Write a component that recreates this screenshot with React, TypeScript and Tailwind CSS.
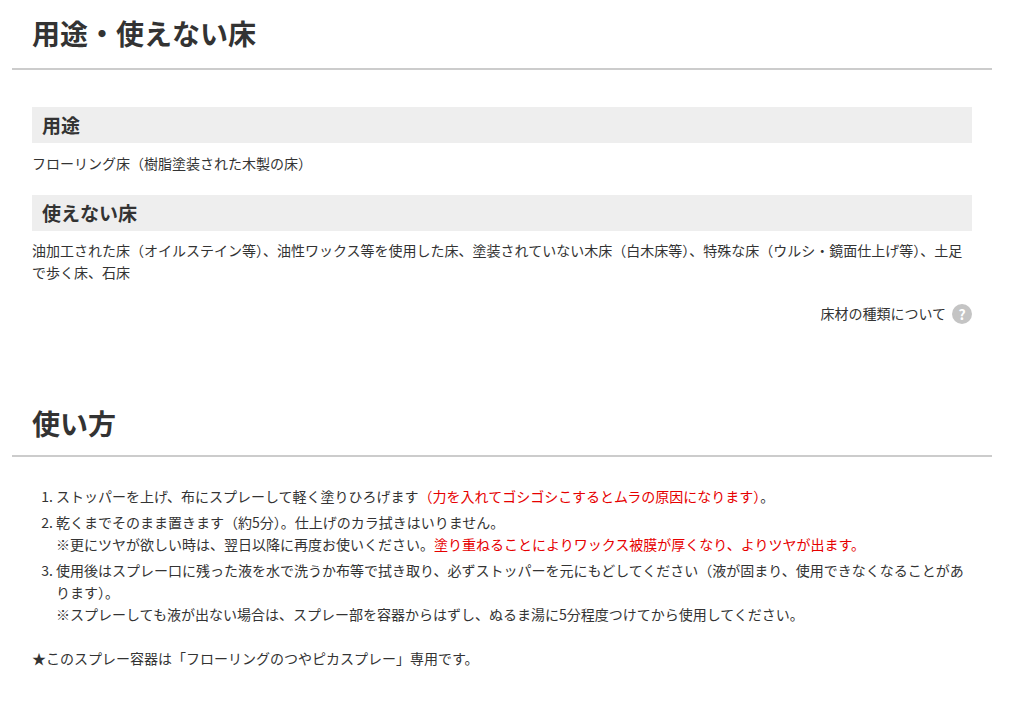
const font = { fontFamily: '"Noto Sans CJK JP", "Liberation Sans", sans-serif' };

function SubTitle({ children }: { children: React.ReactNode }) {
  return (
    <h3 className="bg-[#eeeeee] h-[36px] flex items-center px-[10px] text-[19px] font-bold text-[#333]">{children}</h3>
  );
}

export default function App() {
  return (
    <div className="w-[1036px] bg-white text-[#333] text-[14px]" style={font}>
      <div className="ml-[12px] mr-[44px] border-b-2 border-[#cccccc] h-[70px] flex items-center pl-[20px] pb-[2px]">
        <h2 className="text-[28px] font-bold leading-none">用途・使えない床</h2>
      </div>
      <div className="px-[32px] pr-[64px]">
        <div className="mt-[37px]">
          <SubTitle>用途</SubTitle>
          <p className="mt-[9px] leading-[22px]">フローリング床（樹脂塗装された木製の床）</p>
        </div>
        <div className="mt-[21px]">
          <SubTitle>使えない床</SubTitle>
          <p className="mt-[8px] leading-[22px]">
            油加工された床（オイルステイン等）、油性ワックス等を使用した床、塗装されていない木床（白木床等）、特殊な床（ウルシ・鏡面仕上げ等）、土足で歩く床、石床
          </p>
        </div>
        <div className="flex justify-end items-center gap-[6px] mt-[20px]">
          <span>床材の種類について</span>
          <span className="w-[20px] h-[20px] rounded-full bg-[#c4c4c4] text-white text-[14px] font-bold flex items-center justify-center leading-none">?</span>
        </div>
      </div>
      <div className="ml-[12px] mr-[44px] border-b-2 border-[#cccccc] h-[70px] flex items-center pl-[20px] mt-[63px] pt-[4px]">
        <h2 className="text-[28px] font-bold leading-none">使い方</h2>
      </div>
      <div className="px-[32px] pr-[64px]">
        <ol className="list-decimal pl-[24px] mt-[28px] leading-[22px] flex flex-col gap-[4px]">
          <li>
            ストッパーを上げ、布にスプレーして軽く塗りひろげます<span className="text-[#e60000]">（力を入れてゴシゴシこするとムラの原因になります）</span>。
          </li>
          <li>
            乾くまでそのまま置きます（約5分）。仕上げのカラ拭きはいりません。
            <br />
            ※更にツヤが欲しい時は、翌日以降に再度お使いください。<span className="text-[#e60000]">塗り重ねることによりワックス被膜が厚くなり、よりツヤが出ます。</span>
          </li>
          <li>
            使用後はスプレー口に残った液を水で洗うか布等で拭き取り、必ずストッパーを元にもどしてください（液が固まり、使用できなくなることがあります）。
            <br />
            ※スプレーしても液が出ない場合は、スプレー部を容器からはずし、ぬるま湯に5分程度つけてから使用してください。
          </li>
        </ol>
        <p className="mt-[22px] leading-[22px]">★このスプレー容器は「フローリングのつやピカスプレー」専用です。</p>
      </div>
    </div>
  );
}
